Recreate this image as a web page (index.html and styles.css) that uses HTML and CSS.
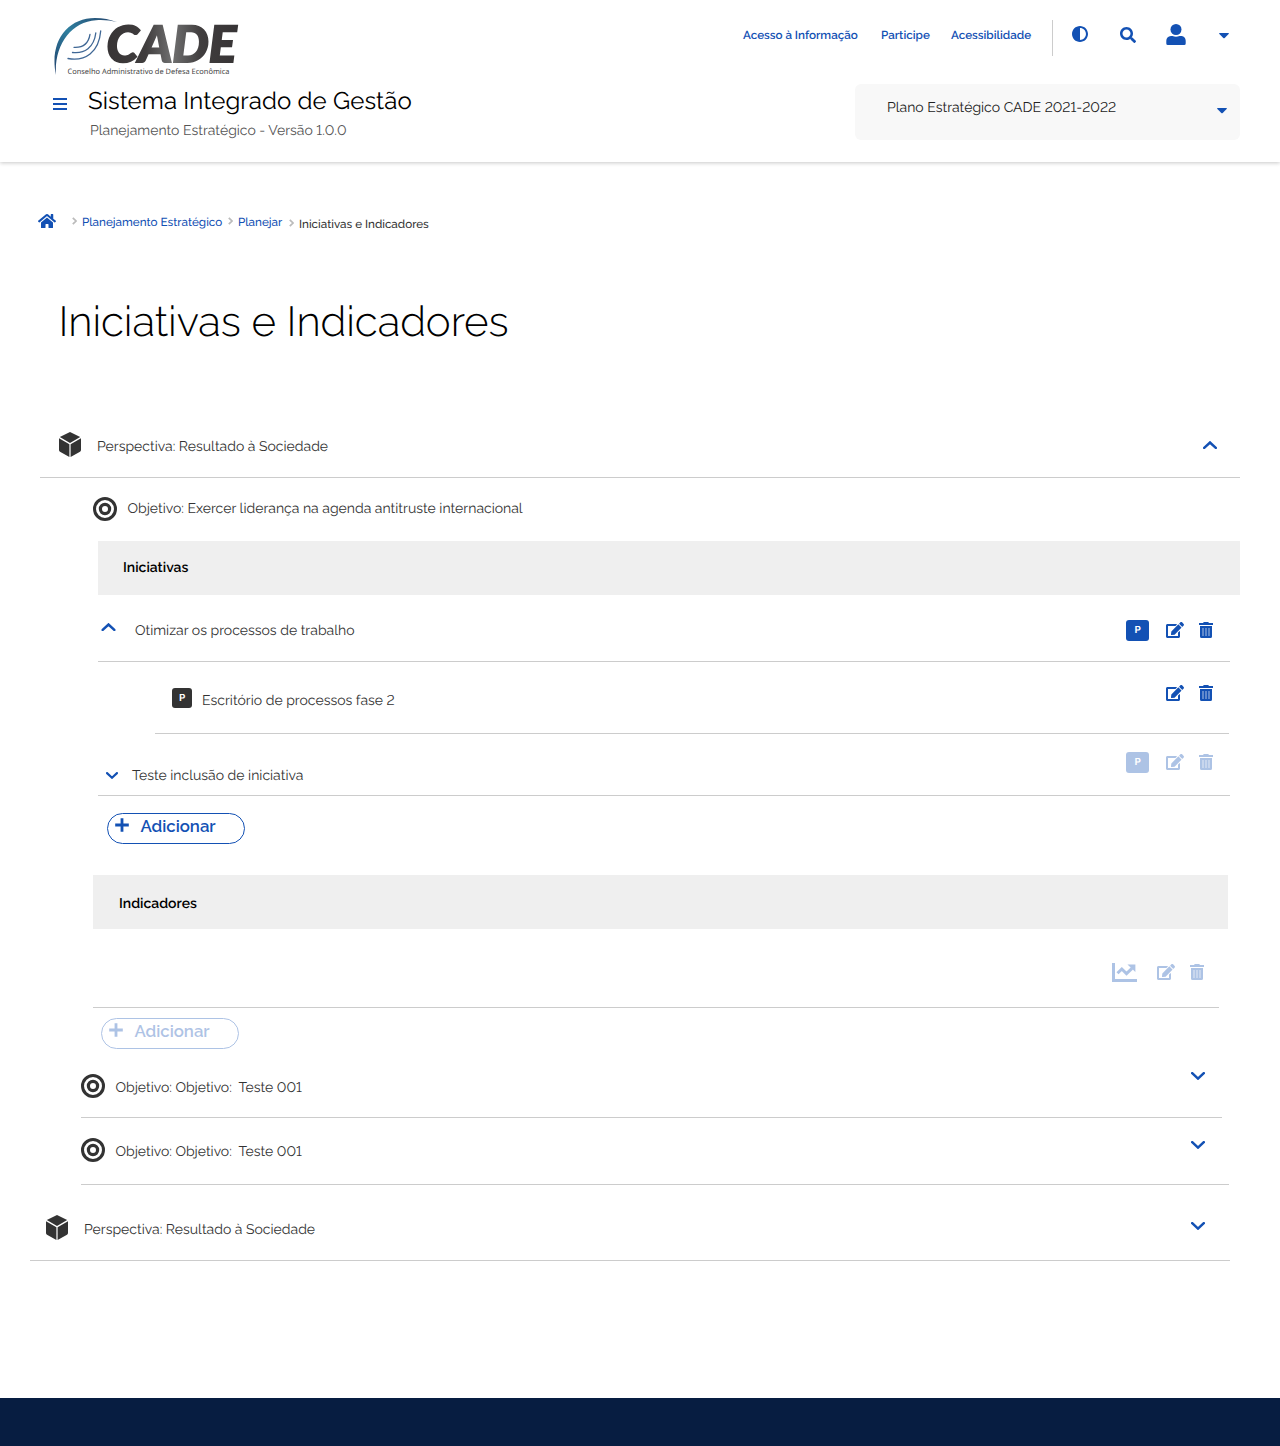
FILE: index.html
```html
<!DOCTYPE html>
<html lang="pt-BR">
<head>
<meta charset="utf-8">
<title>Iniciativas e Indicadores</title>
<link rel="stylesheet" href="styles.css">
</head>
<body>
<svg width="0" height="0" class="sprite" aria-hidden="true">
  <symbol id="edit" viewBox="0 0 576 512"><path d="M402.6 83.2l90.2 90.2c3.8 3.8 3.8 10 0 13.8L274.4 405.6l-92.8 10.3c-12.4 1.4-22.9-9.1-21.5-21.5l10.3-92.8L388.8 83.2c3.8-3.8 10-3.8 13.8 0zm162-22.9l-48.8-48.8c-15.2-15.2-39.9-15.2-55.2 0l-35.4 35.4c-3.8 3.8-3.8 10 0 13.8l90.2 90.2c3.8 3.8 10 3.8 13.8 0l35.4-35.4c15.2-15.3 15.2-40 0-55.2zM384 346.2V448H64V128h229.8c3.2 0 6.2-1.3 8.5-3.5l40-40c7.6-7.6 2.2-20.5-8.5-20.5H48C21.5 64 0 85.5 0 112v352c0 26.5 21.5 48 48 48h352c26.5 0 48-21.5 48-48V306.2c0-10.7-12.9-16-20.5-8.5l-40 40c-2.2 2.3-3.5 5.3-3.5 8.5z"/></symbol>
  <symbol id="trash" viewBox="0 0 14 16"><path d="M0 1h4l.8-1h4.400l.8 1h4v2H0zM1 4h12v10.500a1.500 1.500 0 0 1-1.500 1.500h-9A1.500 1.500 0 0 1 1 14.500z"/><path d="M4 6v8M7 6v8M10 6v8" stroke="#fff" stroke-opacity=".65" fill="none"/></symbol>
  <symbol id="cube" viewBox="0 0 22 25"><path d="M11 0l10.200 5L11 11 .8 5zM0 6.300l10.400 6V25L1 19.700a2 2 0 0 1-1-1.700zM22 6.300l-10.400 6V25l9.400-5.300a2 2 0 0 0 1-1.700z"/></symbol>
  <symbol id="target" viewBox="0 0 24 24"><g fill="none" stroke="currentColor" stroke-width="3"><circle cx="12" cy="12" r="10.500"/><circle cx="12" cy="12" r="4.600" stroke-width="3.200"/></g></symbol>
  <symbol id="down" viewBox="0 0 14 8"><path d="M1.200 1.200L7 6.600l5.800-5.400" fill="none" stroke="currentColor" stroke-width="2.500" stroke-linecap="round"/></symbol>
  <symbol id="up" viewBox="0 0 14 8"><path d="M1.200 6.900L7 1.500l5.800 5.400" fill="none" stroke="currentColor" stroke-width="2.500" stroke-linecap="round"/></symbol>
  <symbol id="caret" viewBox="0 0 10 6"><path d="M.6 0h8.800q.9.300.2 1.100L5.700 5q-.7.600-1.400 0L.4 1.100Q-.3.300.6 0z"/></symbol>
  <symbol id="plus" viewBox="0 0 14 14"><path d="M7 .2v13.600M.2 7h13.600" stroke="currentColor" stroke-width="2.800"/></symbol>
  <symbol id="sep" viewBox="0 0 5 8"><path d="M.8.800L4 4 .8 7.200" fill="none" stroke="currentColor" stroke-width="1.700"/></symbol>
  <symbol id="chart" viewBox="0 0 25 19"><path d="M0 0h3v16H25V19H0z"/><path d="M5.500 10.200l4.300-4.200 4.700 4.600L20 5.300" fill="none" stroke="currentColor" stroke-width="3"/><path d="M15.500 1.600H23.400v7.500z"/></symbol>
</svg>

<header class="header">
  <div class="brand">
    <svg class="logo" viewBox="52 5 200 72" role="img" aria-label="CADE">
      <defs>
        <linearGradient id="arc" x1="0" y1="1" x2="1" y2="0"><stop offset="0" stop-color="#1f3f6b"/><stop offset=".5" stop-color="#2f7f9f"/><stop offset="1" stop-color="#25436b"/></linearGradient>
        <linearGradient id="metal"><stop offset="0" stop-color="#373435"/><stop offset=".3" stop-color="#403d3e"/><stop offset=".5" stop-color="#707070"/><stop offset=".72" stop-color="#403d3e"/><stop offset="1" stop-color="#373435"/></linearGradient>
      </defs>
      <path fill="url(#arc)" d="M56 75C49 42 67 18 95 18c8 0 15 1.500 22.500 4.300C110 20.500 103 19.600 96 20.300 71 22 54 45 56 75z"/>
      <g fill="none" stroke="#3f6795" stroke-width="1.300" stroke-linecap="round"><path d="M68 58.500c17 3 31-6 32.700-27.500"/><path d="M72.500 52.500c12 1.500 21.500-5 23.300-19.500"/><path d="M74 47.300c9 .5 14.500-4 16-13"/></g>
      <text class="logo__name" x="106.500" y="61.500" textLength="130" lengthAdjust="spacingAndGlyphs">CADE</text>
      <text class="logo__tagline" x="67.500" y="73.500" textLength="162" lengthAdjust="spacingAndGlyphs">Conselho Administrativo de Defesa Econômica</text>
    </svg>
    <div class="brand__row">
      <svg class="menu" viewBox="0 0 14 12"><path d="M0 0h14v2H0zM0 5h14v2H0zM0 10h14v2H0z"/></svg>
      <div class="brand__text">
        <div class="system">Sistema Integrado de Gestão</div>
        <div class="version">Planejamento Estratégico - Versão 1.0.0</div>
      </div>
    </div>
  </div>
  <div class="tools">
    <nav class="links">
      <a class="link link--info">Acesso à Informação</a>
      <a class="link link--join">Participe</a>
      <a class="link link--access">Acessibilidade</a>
      <i class="divider"></i>
      <svg class="contrast" viewBox="8 8 496 496"><path d="M8 256c0 136.966 111.033 248 248 248s248-111.034 248-248S392.966 8 256 8 8 119.033 8 256zm248 184V72c101.705 0 184 82.311 184 184 0 101.705-82.311 184-184 184z"/></svg>
      <svg class="search" viewBox="0 0 512 512"><path d="M505 442.700L405.300 343c-4.500-4.500-10.600-7-17-7H372c27.600-35.300 44-79.700 44-128C416 93.100 322.900 0 208 0S0 93.100 0 208s93.100 208 208 208c48.300 0 92.700-16.400 128-44v16.300c0 6.400 2.500 12.500 7 17l99.700 99.700c9.400 9.400 24.600 9.400 33.900 0l28.300-28.300c9.400-9.400 9.400-24.600.1-34zM208 336c-70.700 0-128-57.200-128-128 0-70.700 57.200-128 128-128 70.700 0 128 57.200 128 128 0 70.700-57.200 128-128 128z"/></svg>
      <svg class="user" viewBox="0 0 20 21"><circle cx="10" cy="5.500" r="5.500"/><path d="M5 12h1.500q3.500 1.600 7 0H15c3 0 4.700 2.200 4.700 4.700V19.500q0 1.500-1.500 1.500H1.800Q.3 21 .3 19.500V16.700C.3 14.200 2 12 5 12z"/></svg>
      <svg class="caret"><use href="#caret"/></svg>
    </nav>
    <div class="plan"><span class="plan__name">Plano Estratégico CADE 2021-2022</span><svg class="caret"><use href="#caret"/></svg></div>
  </div>
</header>

<nav class="crumbs">
  <svg class="home" viewBox="0 0 576 512"><path d="M280.370 148.260L96 300.110V464a16 16 0 0 0 16 16l112.060-.29a16 16 0 0 0 15.920-16V368a16 16 0 0 1 16-16h64a16 16 0 0 1 16 16v95.640a16 16 0 0 0 16 16.050L464 480a16 16 0 0 0 16-16V300L295.670 148.260a12.190 12.190 0 0 0-15.300 0zM571.600 251.470L488 182.560V44.050a12 12 0 0 0-12-12h-56a12 12 0 0 0-12 12v72.610L318.470 43a48 48 0 0 0-61 0L4.340 251.470a12 12 0 0 0-1.600 16.900l25.500 31A12 12 0 0 0 45.150 301l235.220-193.740a12.190 12.190 0 0 1 15.300 0L530.900 301a12 12 0 0 0 16.900-1.600l25.500-31a12 12 0 0 0-1.700-16.930z"/></svg>
  <svg class="sep sep--first"><use href="#sep"/></svg>
  <a class="crumb crumb--root">Planejamento Estratégico</a>
  <svg class="sep"><use href="#sep"/></svg>
  <a class="crumb crumb--plan">Planejar</a>
  <svg class="sep sep--last"><use href="#sep"/></svg>
  <span class="crumb crumb--current">Iniciativas e Indicadores</span>
</nav>

<main>
  <h1 class="title">Iniciativas e Indicadores</h1>

  <section class="row row--perspective">
    <svg class="row__icon cube"><use href="#cube"/></svg>
    <span class="row__label">Perspectiva: Resultado à Sociedade</span>
    <svg class="row__end chevron"><use href="#up"/></svg>
  </section>

  <div class="row row--goal-open">
    <svg class="row__icon target"><use href="#target"/></svg>
    <span class="row__label">Objetivo: Exercer liderança na agenda antitruste internacional</span>
  </div>

  <h2 class="band band--initiatives">Iniciativas</h2>

  <div class="row row--optimize">
    <svg class="row__icon chevron"><use href="#up"/></svg>
    <span class="row__label">Otimizar os processos de trabalho</span>
    <div class="row__end actions"><b class="badge">P</b><svg class="edit"><use href="#edit"/></svg><svg class="trash"><use href="#trash"/></svg></div>
  </div>
  <div class="row row--office">
    <b class="row__icon badge badge--dark">P</b>
    <span class="row__label">Escritório de processos fase 2</span>
    <div class="row__end actions"><svg class="edit"><use href="#edit"/></svg><svg class="trash"><use href="#trash"/></svg></div>
  </div>
  <div class="row row--test">
    <svg class="row__icon chevron chevron--small"><use href="#down"/></svg>
    <span class="row__label">Teste inclusão de iniciativa</span>
    <div class="row__end actions disabled"><b class="badge">P</b><svg class="edit"><use href="#edit"/></svg><svg class="trash"><use href="#trash"/></svg></div>
  </div>
  <button class="add"><svg class="plus"><use href="#plus"/></svg><span>Adicionar</span></button>

  <h2 class="band band--indicators">Indicadores</h2>
  <div class="row row--indicator">
    <div class="row__end actions disabled"><svg class="chart"><use href="#chart"/></svg><svg class="edit"><use href="#edit"/></svg><svg class="trash"><use href="#trash"/></svg></div>
  </div>
  <button class="add add--indicator disabled" disabled><svg class="plus"><use href="#plus"/></svg><span>Adicionar</span></button>

  <div class="row row--goal-a">
    <svg class="row__icon target"><use href="#target"/></svg>
    <span class="row__label">Objetivo: Objetivo:&nbsp; Teste 001</span>
    <svg class="row__end chevron"><use href="#down"/></svg>
  </div>
  <div class="row row--goal-b">
    <svg class="row__icon target"><use href="#target"/></svg>
    <span class="row__label">Objetivo: Objetivo:&nbsp; Teste 001</span>
    <svg class="row__end chevron"><use href="#down"/></svg>
  </div>
  <section class="row row--perspective-b">
    <svg class="row__icon cube"><use href="#cube"/></svg>
    <span class="row__label">Perspectiva: Resultado à Sociedade</span>
    <svg class="row__end chevron"><use href="#down"/></svg>
  </section>
</main>
<footer class="footer"></footer>
</body>
</html>
```
FILE: styles.css
```css
* { box-sizing: border-box; }

body {
  margin: 0;
  background: #fff;
  color: #333;
  font: 400 14px/20px Raleway, Lato, sans-serif;
  font-variant-numeric: lining-nums;
  text-rendering: geometricPrecision;
}

svg { display: block; flex: none; fill: currentColor; }
.sprite { display: none; }

/* Header */
.header {
  display: flex;
  justify-content: space-between;
  height: 162px;
  padding: 5px 40px 0 52px;
  box-shadow: 0 1px 4px rgba(0, 0, 0, .22);
}
.logo { width: 200px; height: 72px; }
.logo__name { font: italic 900 50px Lato, sans-serif; fill: url(#metal); stroke: url(#metal); stroke-width: 1.8px; }
.logo__tagline { font: 400 7.5px "Noto Sans", sans-serif; fill: #444; }
.brand__row { display: flex; margin-top: 8px; }
.menu { width: 14px; height: 12px; margin: 13px 21px 0 1px; color: #1351b4; }
.system { padding-top: 1px; color: #000; font-size: 24px; line-height: 30px; letter-spacing: .09px; }
.version { margin: 5px 0 0 2px; color: #555; }

.tools { display: flex; flex-direction: column; align-items: flex-end; padding-top: 12px; }
.links {
  display: flex;
  align-items: flex-start;
  width: 497px;
  height: 67px;
  color: #1351b4;
}
.link { margin-top: 8px; font-size: 11.67px; font-weight: 600; white-space: nowrap; }
.link--info { width: 138px; }
.link--join { width: 70px; }
.link--access { width: 101px; }
.divider { width: 1px; height: 36px; margin-top: 3px; background: #ccc; }
.contrast { width: 16px; height: 16px; margin: 9px 0 0 19px; }
.search { width: 16px; height: 16px; margin: 10px 0 0 32px; }
.user { width: 20px; height: 21px; margin: 7px 0 0 30px; }
.caret { width: 10px; height: 6px; color: #1351b4; }
.links .caret { margin: 16px 0 0 33px; }
.plan {
  display: flex;
  justify-content: space-between;
  width: 385px;
  height: 56px;
  padding: 14px 13px 0 32px;
  border-radius: 6px;
  background: #f8f8f8;
  color: #222;
}
.plan .caret { margin-top: 10px; }

/* Breadcrumb */
.crumbs {
  display: flex;
  align-items: flex-start;
  height: 130px;
  padding: 50px 0 0 38px;
  color: #1351b4;
  font-size: 11.67px;
  font-weight: 500;
}
.home { width: 18px; height: 16px; margin-top: 1px; }
.sep { width: 5px; height: 8px; margin: 5px 5px 0 6px; color: #bbb; }
.sep--first { margin: 5px 5px 0 16px; }
.sep--last { margin: 7px 5px 0 7px; }
.crumb { white-space: nowrap; }
.crumb--root { width: 140px; }
.crumb--plan { width: 44px; }
.crumb--current { margin-top: 2px; color: #333; }

.title {
  height: 126px;
  margin: 0;
  padding-left: 58.500px;
  color: #000;
  font-size: 42px;
  line-height: 60px;
  font-weight: 300;
  letter-spacing: -.09px;
}

/* Tree rows: --icon, --label and --end hold each item's drop from the row's top */
.row {
  display: flex;
  align-items: flex-start;
  border-bottom: 1px solid #ccc;
}
.row__icon { margin-top: var(--icon); }
.row__label { margin-top: var(--label); white-space: pre; }
.row__end { margin: var(--end) 0 0 auto; }

.cube { width: 22px; height: 25px; margin-right: 16px; }
.target { width: 24px; height: 24px; margin-right: 10.500px; }
.chevron { width: 14px; height: 8px; color: #1351b4; }
.chevron--small { width: 12px; height: 7px; }

.row--perspective { --icon: 14px; --label: 19px; --end: 23px; height: 60px; margin: 0 40px; padding: 0 23px 0 19px; }
.row--goal-open { --icon: 19px; --label: 21px; height: 63px; margin-left: 93px; border: 0; }
.row--optimize { --icon: 28px; --label: 26px; --end: 25px; height: 67px; margin: 0 50px 0 98px; padding: 0 17px 0 3px; }
.row--optimize .chevron { width: 15px; margin-right: 19px; }
.row--office { --icon: 26px; --label: 29px; --end: 23px; height: 72px; margin: 0 51px 0 155px; padding: 0 16px 0 17px; }
.row--test { --icon: 38px; --label: 32px; --end: 18px; height: 62px; margin: 0 50px 0 98px; padding: 0 17px 0 8px; }
.row--test .chevron { margin-right: 14px; }
.row--indicator { --end: 34px; height: 79px; margin: 0 61px 0 93px; padding-right: 15px; }
.row--goal-a { --icon: 25px; --label: 29px; --end: 23px; height: 69px; margin: 0 58px 0 81px; padding-right: 17px; }
.row--goal-b { --icon: 20px; --label: 24px; --end: 23px; height: 67px; margin: 0 51px 0 81px; padding-right: 24px; }
.row--perspective-b { --icon: 30px; --label: 35px; --end: 37px; height: 76px; margin: 0 50px 0 30px; padding: 0 25px 0 16px; }

.band {
  height: 54px;
  margin: 0;
  background: #efefef;
  color: #000;
  font-size: 14px;
  font-weight: 600;
}
.band--initiatives { margin: 0 40px 0 98px; padding: 17px 25px 0; }
.band--indicators { margin: 31px 52px 0 93px; padding: 19px 26px 0; }

.actions { display: flex; align-items: center; color: #1351b4; }
.disabled { opacity: .34; }
.edit { width: 18px; height: 16px; margin-bottom: 1px; }
.trash { width: 14px; height: 16px; margin: 0 0 1px 15px; }
.chart { width: 25px; height: 19px; margin-right: 20px; }
.badge {
  width: 23px;
  height: 21px;
  margin-right: 17px;
  border-radius: 3px;
  background: #1351b4;
  color: #fff;
  font: 700 10px/22px Raleway, Lato, sans-serif;
  text-align: center;
}
.badge--dark { width: 20px; height: 20px; margin-right: 10px; background: #333; }

.add {
  display: flex;
  align-items: flex-start;
  width: 138px;
  height: 31px;
  margin: 17px 0 0 107px;
  padding: 2px 7px 0;
  border: 1px solid #1351b4;
  border-radius: 16px;
  background: #fff;
  color: #1351b4;
  font: 600 16.8px/20px Raleway, Lato, sans-serif;
}
.add--indicator { margin: 10px 0 0 101px; }
.plus { width: 14px; height: 14px; margin: 2px 11.5px 0 0; }

.footer { height: 48px; margin-top: 137px; background: #071d41; }
```
